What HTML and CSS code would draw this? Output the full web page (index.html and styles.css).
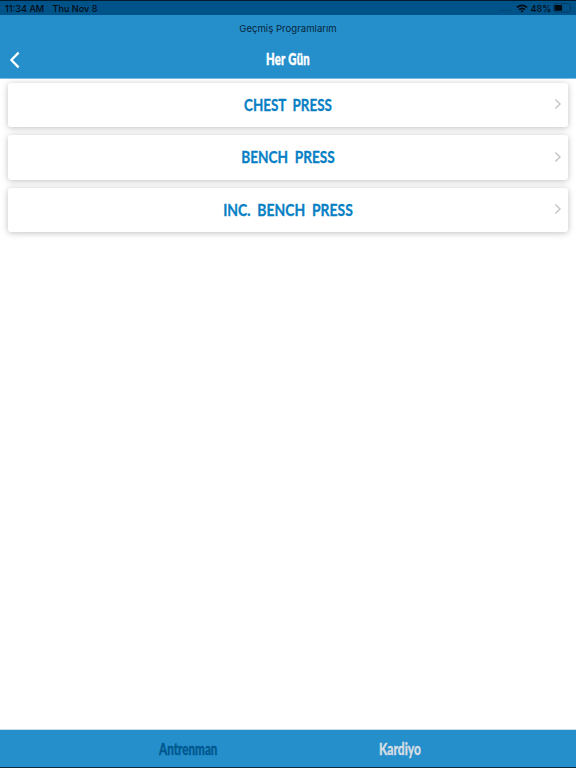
FILE: index.html
```html
<!DOCTYPE html>
<html lang="tr">
<head>
<meta charset="utf-8">
<title>Her Gün</title>
<link rel="stylesheet" href="styles.css">
</head>
<body>
<div class="screen">
  <div class="status">
    <span class="time">11:34 AM</span><span class="date">Thu Nov 8</span>
    <div class="indicators">
      <svg class="dots" width="13" height="3" viewBox="0 0 13 3"><g fill="#003f6b"><circle cx="1.5" cy="1.5" r=".8"/><circle cx="4.8" cy="1.5" r=".8"/><circle cx="8.1" cy="1.5" r=".8"/><circle cx="11.4" cy="1.5" r=".8"/></g></svg>
      <svg class="wifi" width="12" height="9" viewBox="0 0 12 9"><g fill="none" stroke="#020b12" stroke-width="1.7"><path d="M1 3.5Q6 -.9 11 3.5"/><path d="M3 5.6Q6 3 9 5.6"/></g><path d="M4.4 6.9Q6 5.7 7.6 6.9L6 8.6Z" fill="#020b12"/></svg>
      <span class="percent">48%</span>
      <svg class="battery" width="20" height="10" viewBox="0 0 20 10"><rect x=".5" y=".6" width="16.8" height="8.4" rx="2" fill="none" stroke="#003c66"/><rect x="1.5" y="1.9" width="7.6" height="5.9" rx=".8" fill="#000a12"/><path d="M18.3 3.4Q19.6 4.8 18.3 6.2Z" fill="#003c66"/></svg>
    </div>
  </div>
  <header class="header">
    <div class="subtitle">Geçmiş Programlarım</div>
    <div class="nav">
      <svg class="back" width="12" height="18" viewBox="0 0 12 18"><path d="M9.6 1.6L2.4 9L9.6 16.4" fill="none" stroke="#fff" stroke-width="2.3"/></svg>
      <h1 class="title">Her Gün</h1>
    </div>
  </header>
  <main class="list">
    <div class="card"><span class="name chest">CHEST PRESS</span><svg class="chevron" width="8" height="12" viewBox="0 0 8 12"><path d="M1.4 1.6L6 6L1.4 10.4" fill="none" stroke="#c4c4c6" stroke-width="1.4"/></svg></div>
    <div class="card"><span class="name bench">BENCH PRESS</span><svg class="chevron" width="8" height="12" viewBox="0 0 8 12"><path d="M1.4 1.6L6 6L1.4 10.4" fill="none" stroke="#c4c4c6" stroke-width="1.4"/></svg></div>
    <div class="card"><span class="name incline">INC. BENCH PRESS</span><svg class="chevron" width="8" height="12" viewBox="0 0 8 12"><path d="M1.4 1.6L6 6L1.4 10.4" fill="none" stroke="#c4c4c6" stroke-width="1.4"/></svg></div>
  </main>
  <footer class="tabs">
    <div class="tab active"><span>Antrenman</span></div>
    <div class="tab"><span>Kardiyo</span></div>
  </footer>
</div>
</body>
</html>
```

FILE: styles.css
```css
* { box-sizing: border-box; }
body { margin: 0; background: #fff; font-family: Inter, "Liberation Sans", sans-serif; }
.screen { width: 576px; height: 768px; display: flex; flex-direction: column; overflow: hidden; border-bottom: 1px solid #0b2b42; }
.status { height: 15px; flex: none; display: flex; align-items: center; padding: 0 3px 0 5px; background: #005389; border-top: 1px solid #001b2e; color: #020b12; font-size: 9.1px; font-weight: 500; white-space: nowrap; }
.time { width: 47.5px; }
.indicators { margin-left: auto; display: flex; align-items: center; }
.dots { margin: 5px 4px 0 0; }
.wifi { margin-right: 3px; }
.percent { width: 20px; margin-right: 2px; }
.battery { margin-right: .5px; }
.header { height: 64px; flex: none; background: #258fcc; border-bottom: 1px solid #7dbce0; }
.subtitle { height: 27px; line-height: 27px; text-align: center; font-size: 9.6px; color: #06263a; }
.nav { height: 36px; display: grid; grid-template-columns: 30px 1fr 30px; align-items: center; }
.back { margin: -1px 0 0 8.5px; }
.title { margin: -2px 0 0; text-align: center; font: 900 16.3px/34px Lato, sans-serif; letter-spacing: .4px; color: #fff; transform: scaleX(.69); -webkit-text-stroke: .4px #fff; }
.list { flex: 1; display: flex; flex-direction: column; gap: 8px; padding: 3.5px 8px 0; }
.card { height: 44.5px; flex: none; display: grid; grid-template-columns: 14px 1fr 14px; align-items: center; background: #fff; border-radius: 3px; box-shadow: 0 1px 6px rgba(0, 0, 0, .25); }
.name { grid-column: 2; margin-top: -.5px; text-align: center; font: 700 16.3px/42px Lato, sans-serif; word-spacing: 4px; color: #087fc4; -webkit-text-stroke: .3px #087fc4; }
.chest { transform: scaleX(.825); }
.bench { transform: scaleX(.838); }
.incline { transform: scaleX(.855); }
.chevron { margin: -1px 0 0; }
.tabs { height: 38px; flex: none; display: flex; justify-content: space-between; padding: 0 72px 0 82px; background: #258fcc; border-top: 1px solid #c9dde8; }
.tab { width: 214px; text-align: center; font: 900 16px/38px Lato, sans-serif; color: #d3dde4; -webkit-text-stroke: .3px currentColor; }
.tab span { display: inline-block; transform: scaleX(.75); }
.tab.active { width: 218px; color: #00588f; }
.tab.active span { transform: scaleX(.725); }
```
